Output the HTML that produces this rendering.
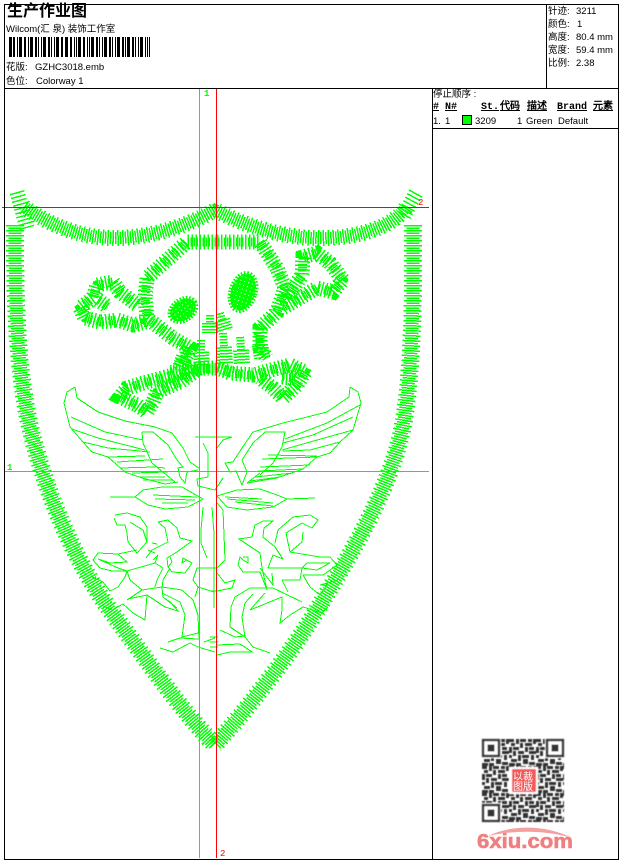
<!DOCTYPE html>
<html>
<head>
<meta charset="utf-8">
<style>
html,body{margin:0;padding:0;background:#fff}
body{width:620px;height:860px;position:relative;overflow:hidden;font-family:"Liberation Sans","WenQuanYi Zen Hei","Noto Sans CJK SC",sans-serif;font-size:9.5px;color:#000}
.t{position:absolute;white-space:pre;line-height:13px}
.h{position:absolute;top:102px;line-height:12px;font-family:"Liberation Mono","WenQuanYi Zen Hei",monospace;font-weight:bold;font-size:10px;text-decoration:underline;white-space:pre}
.r{position:absolute;top:116px;line-height:12px;white-space:pre}
svg{position:absolute;left:0;top:0}
.thin{fill:none;stroke:#00ff00;stroke-width:1;shape-rendering:crispEdges}
.a{fill:none;stroke:#00ff00;stroke-width:18;stroke-dasharray:1.5 3.5;shape-rendering:crispEdges}
.b{fill:none;stroke:#00ff00;stroke-width:13;stroke-dasharray:1.5 3.5;stroke-dashoffset:2.5;shape-rendering:crispEdges}
.m{fill:none;stroke:#00ff00;stroke-width:8;stroke-dasharray:1.5 1;shape-rendering:crispEdges}
.c{fill:none;stroke:#00ff00;stroke-width:15;stroke-dasharray:1.5 2.5;shape-rendering:crispEdges}
.d{fill:none;stroke:#00ff00;stroke-width:9;stroke-dasharray:1.5 1.5;stroke-dashoffset:2;shape-rendering:crispEdges}
.e{fill:none;stroke:#00ff00;stroke-width:12;stroke-dasharray:1.5 1.5;shape-rendering:crispEdges}
</style>
</head>
<body>
<svg width="620" height="860" viewBox="0 0 620 860">
<defs>
<path id="sl" d="M15 225C15 300 17 350 24 395C32 450 60 540 110 610C140 650 180 710 215 745"/>
<path id="sr" d="M413 225C414 300 412 370 404 420C395 470 372 520 323 600C297 645 255 700 215 745"/>
<path id="st" d="M24 207C50 225 80 238 115 238C150 238 190 225 215 210C250 228 290 240 330 238C365 236 395 225 406 207"/>
<path id="k" d="M217 242L187 242L167 260L147 278L145 298L147 318L173 338L190 348L180 368M217 242L260 242L277 268L285 288L277 312L260 328L260 348L267 358"/>
<path id="b1" d="M137 305L120 292L113 282L97 285L93 298L80 308L85 318L100 322L117 320L133 325L147 322M98 300L108 307"/>
<path id="b2" d="M217 368L200 368L173 375L147 382L127 388L120 397L137 405L147 412L153 402L157 392L180 382L200 368"/>
<path id="b3" d="M287 298L302 275L303 257L317 253L330 263L343 280L333 292L317 288L300 298L283 308"/>
<path id="b4" d="M217 368L230 373L253 375L290 365L305 372L297 385L283 398L273 388L260 378M282 377L295 378"/>
<pattern id="sp" width="4" height="4" patternUnits="userSpaceOnUse"><rect width="4" height="4" fill="#00ff00"/><rect x="1" y="1" width="1" height="1" fill="#fff"/></pattern>
<filter id="bl" x="-5%" y="-5%" width="110%" height="110%"><feGaussianBlur stdDeviation="0.45"/></filter>
</defs>

<!-- shield satin -->
<g class="a"><use href="#sl"/><use href="#sr"/></g>
<g class="b"><use href="#sl"/><use href="#sr"/></g>
<g class="m"><use href="#sl"/><use href="#sr"/></g>
<g class="a" style="stroke-width:16"><use href="#st"/></g>
<g class="b" style="stroke-width:12"><use href="#st"/></g>
<g class="m"><use href="#st"/></g>
<path class="c" style="stroke-width:15" d="M17 192L27 228M416 193L403 217"/>

<!-- skull -->
<g class="c"><use href="#k"/><use href="#b1"/><use href="#b2"/><use href="#b3"/><use href="#b4"/></g>
<g class="d"><use href="#k"/><use href="#b1"/><use href="#b2"/><use href="#b3"/><use href="#b4"/></g>
<!-- nose and teeth -->
<path class="e" style="stroke-width:8" d="M210 315L210 323M220 313L222 320M201 340L201 352M223 333L224 347M240 337L241 350M187 347L184 357M258 333L260 345"/>
<path class="e" style="stroke-width:16" d="M210 323L210 333M222 320L225 330M201 352L202 367M224 347L225 364M241 350L242 365M184 357L180 368M260 345L262 358"/>
<path class="e" style="stroke-width:10" d="M170 370L217 368L234 372"/>
<!-- eyes -->
<ellipse cx="183" cy="310" rx="14" ry="10" transform="rotate(-35 183 310)" fill="url(#sp)" stroke="#00ff00" stroke-width="5" stroke-dasharray="1.5 1.500" shape-rendering="crispEdges"/>
<ellipse cx="243" cy="292" rx="12" ry="19" transform="rotate(18 243 292)" fill="url(#sp)" stroke="#00ff00" stroke-width="5" stroke-dasharray="1.5 1.500" shape-rendering="crispEdges"/>

<!-- wings and ornament -->
<path class="thin" d="M75 387L67 392L64 403L70 427L83 442L92 452L108 457L125 472L142 478L165 484L178 482
M75 387L77 398L98 412L125 421L155 427L172 433L183 448L190 462L200 469
M142 432L153 432L168 445L177 460L183 467L178 468L180 477L185 483L187 472L198 470
M142 432L143 443L152 463L175 482
M71 417L105 432L143 440M72 429L98 438L145 450M83 442L108 448L150 452M108 457L145 456M117 462L163 459M120 468L155 467L165 468M132 473L168 472M140 477L165 477M143 480L173 480
M110 497L135 497L143 490L162 487L182 487L203 499L188 507L165 509L148 505L135 497M153 495L197 497M155 499L195 500M162 503L188 503
M195 437L232 437L223 440L217 448M203 443L208 453L208 477L197 479L198 486L215 490L223 478
M203 507L201 530L201 543L207 558M212 507L214 533L214 608
M350 387L358 392L361 403L353 430L340 442L330 453L317 457L303 469L277 478L247 483L260 473
M350 387L349 397L327 412L283 423L253 432L242 448L233 462L225 463L230 472L236 471L242 485L247 472L242 460L253 443L265 432L285 432L282 447L273 463L260 475
M360 405L327 423L285 439M353 417L313 435L283 443M353 430L310 442L282 450M340 442L310 450L283 451M317 456L268 455M317 457L262 459M310 465L260 467M303 469L258 471M293 473L255 477M280 477L250 481
M217 496L237 490L260 489L277 495L287 499L273 507L247 510L227 507L217 496M287 499L315 498M225 497L262 499M227 499L273 503M235 502L273 506
M217 503L223 510L225 560L217 568L210 568
M115 515L127 513L140 517L147 527L147 542L137 553L128 542L127 533L125 525L117 525L114 518M130 522L143 530L147 542
M137 550L118 554L98 553L93 560L100 568L112 571L127 571L125 577L118 587L110 591L103 582L92 577
M98 559L118 568L127 571L130 580L142 590M98 559L110 563L127 562L118 554
M158 522L168 520L177 528L180 538L192 541L177 552L167 558L168 567M158 522L165 528L168 542L152 550L146 558M152 543L157 544M155 553L148 550
M127 571L155 563L158 555L153 560M155 563L163 568L157 580L155 587M170 568L163 580L162 588L163 597L177 608
M127 600L142 590L162 587L182 590L193 600L198 615L199 640
M128 599L147 595L145 620L133 613L123 604L112 610L103 606M147 595L165 607L178 611L170 602L163 597
M162 593L180 602L185 615L182 637L198 633
M170 557L172 562L168 567L172 572L185 573L192 563L183 558L182 563L187 560
M160 648L173 652L190 643L198 647L215 652M168 642L180 638L198 639M204 642L215 638
M193 580L197 568L214 568M193 580L198 587L214 592M198 587L195 597
M252 537L255 525L263 521L273 521L264 528L263 537L275 547L283 559
M252 537L239 539L260 553L262 568L267 590
M275 543L278 530L293 517L310 515L318 520L312 528L302 523L286 533L290 552L302 542L303 532
M290 552L320 557L330 557L337 565L323 575L303 575L310 587L320 595L327 585L320 585L338 580
M302 568L268 568L273 555L283 559M302 568L307 563L330 563L317 570L302 568M300 580L302 568M282 580L300 580M282 580L288 592
M231 607L235 597L250 588L273 588L302 602M250 610L282 597L282 610L280 623L290 615L303 607L322 613L328 607M250 610L265 593
M242 617L245 603L253 594M231 607L230 627L245 637M242 617L245 637L253 647L270 653
M217 645L240 644L252 652L230 652L217 655M220 630L235 637L245 636
M243 557L248 557L248 563L243 560L240 557L238 565L243 572L260 572L267 590M260 568L273 585L272 573
M217 573L225 583L235 580L232 588L217 591L210 591
M210 637L218 637M210 642L218 642M210 647L218 647"/>

<!-- guide lines -->
<rect x="199" y="89" width="1" height="769" fill="#00ff00"/>
<rect x="5" y="471" width="424" height="1" fill="#00ff00"/>
<rect x="216" y="89" width="1" height="769" fill="#ff0000"/>
<rect x="2" y="207" width="427" height="1" fill="#ff0000"/>
<text x="204" y="96" font-family="'Liberation Mono',monospace" font-size="9" font-weight="bold" fill="#00ff00">1</text>
<text x="7" y="470" font-family="'Liberation Mono',monospace" font-size="9" font-weight="bold" fill="#00ff00">1</text>
<text x="418" y="205" font-family="'Liberation Mono',monospace" font-size="9" fill="#ff0000">2</text>
<text x="220" y="856" font-family="'Liberation Mono',monospace" font-size="9" fill="#ff0000">2</text>

<!-- frame -->
<path d="M4.5 4.5H618.500V859.500H4.500ZM4.500 88.500H618.500M546.500 4.500V88.500M432.500 88.500V859.500M432.500 128.500H618.500" fill="none" stroke="#000" stroke-width="1" shape-rendering="crispEdges"/>

<!-- barcode -->
<g fill="none" stroke="#000" shape-rendering="crispEdges">
<path stroke-width="3" d="M10.500 37v20M20.500 37v20M31.500 37v20M44.500 37v20M57.500 37v20M66.500 37v20M79.500 37v20M92.500 37v20M105.500 37v20M118.500 37v20M128.500 37v20M141.500 37v20"/>
<path stroke-width="2" d="M14 37v20M25 37v20M36 37v20M49 37v20M62 37v20M71 37v20M84 37v20M97 37v20M110 37v20M123 37v20M133 37v20"/>
<path stroke-width="1" d="M17.500 37v20M28.500 37v20M38.500 37v20M41.500 37v20M51.500 37v20M54.500 37v20M74.500 37v20M76.500 37v20M87.500 37v20M89.500 37v20M99.500 37v20M102.500 37v20M112.500 37v20M115.500 37v20M125.500 37v20M135.500 37v20M138.500 37v20M145.500 37v20M147.500 37v20M149.500 37v20"/>
</g>

<!-- table swatch -->
<rect x="462.500" y="115.500" width="9" height="9" fill="#00ff00" stroke="#000" shape-rendering="crispEdges"/>

<!-- QR -->
<defs>
<pattern id="q" x="482" y="739" width="27" height="27" patternUnits="userSpaceOnUse">
<path fill="#333" d="M0 0h5v3H0zM7 0h3v5H7zM11 0h6v3h-6zM19 0h4v3h-4zM24 0h3v5h-3zM2 4h4v3H2zM11 4h3v5h-3zM16 4h7v3h-7zM0 8h3v6H0zM4 8h6v3H4zM16 8h3v5h-3zM20 8h5v3h-5zM4 12h3v5H4zM9 12h6v3H9zM20 12h7v3h-7zM0 16h3v3H0zM9 16h3v6H9zM13 16h7v3h-7zM22 16h3v5h-3zM2 20h6v3H2zM14 20h5v5h-5zM0 24h6v3H0zM7 24h5v3H7zM20 23h6v3h-6z"/>
</pattern>
</defs>
<g filter="url(#bl)">
<rect x="482" y="739" width="82" height="83" fill="url(#q)"/>
<g fill="#fff"><rect x="481" y="738" width="20" height="20"/><rect x="545" y="738" width="20" height="20"/><rect x="481" y="803" width="20" height="20"/></g>
<g fill="none" stroke="#333" stroke-width="2.500">
<rect x="483" y="740" width="16" height="16"/><rect x="547" y="740" width="16" height="16"/><rect x="483" y="805" width="16" height="16"/>
</g>
<g fill="#333"><rect x="487.500" y="744.500" width="7" height="7"/><rect x="551.500" y="744.500" width="7" height="7"/><rect x="487.500" y="809.500" width="7" height="7"/></g>
<rect x="509" y="767" width="29" height="27" fill="#fff"/>
<rect x="512" y="769" width="24" height="23" rx="1" fill="#f25a5a"/>
</g>
<text x="513" y="780" font-size="10" fill="#fff" font-family="'WenQuanYi Zen Hei','Noto Sans CJK SC',sans-serif">以裁</text>
<text x="513" y="790" font-size="10" fill="#fff" font-family="'WenQuanYi Zen Hei','Noto Sans CJK SC',sans-serif">图版</text>

<!-- logo -->
<text x="477" y="848" font-family="'Liberation Sans',sans-serif" font-weight="bold" font-size="20" fill="#f17f7f" stroke="#f17f7f" stroke-width=".6" textLength="96" lengthAdjust="spacingAndGlyphs">6xiu.com</text>
<path d="M488 836C510 825 545 824 572 838C545 830 515 830 488 836Z" fill="#f4a0a0"/>
</svg>

<div class="t" style="left:7px;top:3px;font-size:16px;line-height:18px;font-weight:bold">生产作业图</div>
<div class="t" style="left:6px;top:23px">Wilcom(汇 泉) 装饰工作室</div>
<div class="t" style="left:6px;top:61px">花版:</div><div class="t" style="left:35px;top:61px">GZHC3018.emb</div>
<div class="t" style="left:6px;top:75px">色位:</div><div class="t" style="left:36px;top:75px">Colorway 1</div>

<div class="t" style="left:548px;top:5px">针迹:</div><div class="t" style="left:576px;top:5px">3211</div>
<div class="t" style="left:548px;top:18px">颜色:</div><div class="t" style="left:577px;top:18px">1</div>
<div class="t" style="left:548px;top:31px">高度:</div><div class="t" style="left:576px;top:31px">80.4 mm</div>
<div class="t" style="left:548px;top:44px">宽度:</div><div class="t" style="left:576px;top:44px">59.4 mm</div>
<div class="t" style="left:548px;top:57px">比例:</div><div class="t" style="left:576px;top:57px">2.38</div>

<div class="t" style="left:433px;top:88px">停止顺序 :</div>
<div class="h" style="left:433px">#</div>
<div class="h" style="left:445px">N#</div>
<div class="h" style="left:481px">St.</div>
<div class="h" style="left:500px">代码</div>
<div class="h" style="left:527px">描述</div>
<div class="h" style="left:557px">Brand</div>
<div class="h" style="left:593px">元素</div>
<div class="r" style="left:433px">1.</div>
<div class="r" style="left:445px">1</div>
<div class="r" style="left:475px">3209</div>
<div class="r" style="left:517px">1</div>
<div class="r" style="left:526px">Green</div>
<div class="r" style="left:558px">Default</div>
</body>
</html>
